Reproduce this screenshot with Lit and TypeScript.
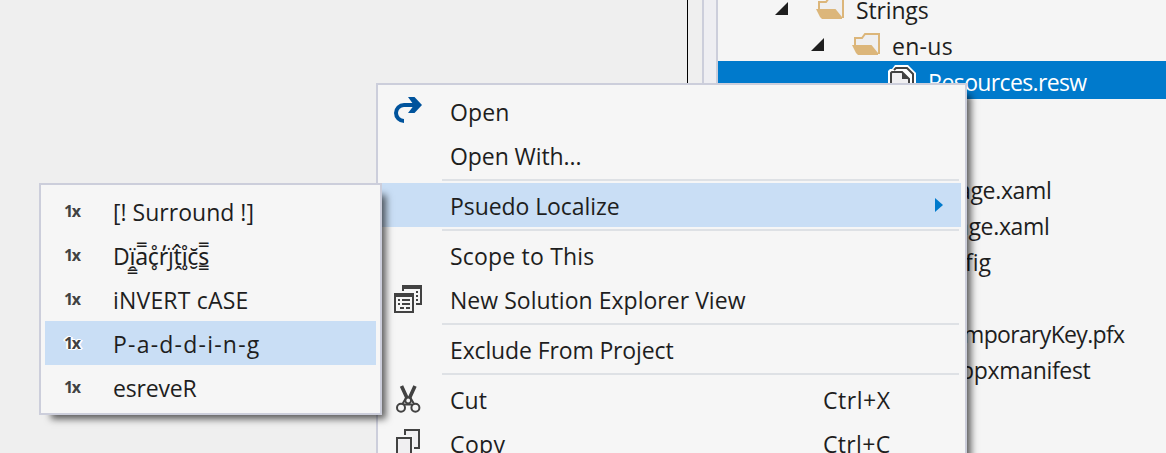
import { LitElement, html, css, svg, nothing } from 'lit';
import { customElement, property } from 'lit/decorators.js';

/** A label whose tracking is adjusted so that it takes up the given width. */
@customElement('fit-text')
class FitText extends LitElement {
  @property() text = '';
  @property({ type: Number }) width = 0;
  static styles = css`
    :host { display: block; white-space: pre; flex: none; }
    span { display: inline-block; }
  `;
  render() {
    return html`<span>${this.text}</span>`;
  }
  firstUpdated() {
    const el = this.renderRoot.querySelector('span') as HTMLElement;
    const n = [...this.text.normalize('NFD').replace(/\p{M}/gu, '')].length;
    if (!this.width || n < 2) return;
    const natural = el.getBoundingClientRect().width;
    el.style.letterSpacing = `${(this.width - natural) / n}px`;
  }
}

const openIcon = svg`<svg width="28" height="28" viewBox="0 0 28 28">
  <path d="M10 24A8 8 0 0 1 10 8H22" fill="none" stroke="#00539c" stroke-width="4"/>
  <path d="M14 0h6.500L28 8l-7.500 8H14l6-7.800z" fill="#00539c"/></svg>`;

const viewIcon = svg`<svg width="28" height="28" viewBox="0 0 28 28" shape-rendering="crispEdges">
  <path d="M8 0H28V20H22V18H26V4H10V6H8z" fill="#424242"/>
  <path d="M22 6h2v2h-2zM22 10h2v2h-2zM22 14h2v2h-2z" fill="#424242"/>
  <path d="M0 8H20V28H0zM2 12V26H18V12z" fill="#424242" fill-rule="evenodd"/>
  <path d="M4 14h2v2H4zM8 14h8v2H8zM4 18h2v2H4zM8 18h8v2H8zM6 22h4v2H6zM12 22h4v2h-4z" fill="#424242"/></svg>`;

const cutIcon = svg`<svg width="28" height="28" viewBox="0 0 28 28" fill="none" stroke="#424242">
  <path d="M7.500 1L13 13M21 1L15.500 13" stroke-width="3.600"/>
  <path d="M12.500 12L8.500 19M16 12l4 7" stroke-width="2"/>
  <circle cx="14.200" cy="15.500" r="2.800" stroke-width="1.800"/>
  <path d="M10 19.500H18" stroke-width="2"/>
  <circle cx="7" cy="22.800" r="4" stroke-width="2"/><circle cx="21.400" cy="22.800" r="4" stroke-width="2"/></svg>`;

const copyIcon = svg`<svg width="28" height="28" viewBox="0 0 28 28" shape-rendering="crispEdges">
  <path d="M11 1H25V18H19V6H11z" fill="#f0eff1"/>
  <path d="M10 0H26V20H20V18H24V2H12V6H10z" fill="#424242"/>
  <path d="M3 9H17V26H3z" fill="#f0eff1" stroke="#424242" stroke-width="2"/></svg>`;

const ICONS: Record<string, unknown> = { open: openIcon, view: viewIcon, cut: cutIcon, copy: copyIcon };

const folder = svg`<svg width="28" height="22" viewBox="0 0 28 22">
  <path d="M3 14V5H10L13 1H27V21" fill="#efeff0" stroke="#dcb67a" stroke-width="2"/>
  <path d="M0 12H19.500L26 20V22H6L4 20z" fill="#dcb67a"/></svg>`;

const files = svg`<svg width="28" height="32" viewBox="0 0 28 32">
  <path d="M0 32V6L2 4H4L7 0H20L28 8V32z" fill="#fff"/>
  <path d="M6 5L8 3H19L25 9V32" fill="none" stroke="#424242" stroke-width="2"/>
  <path d="M3 32V8L4 7H14L21 14V32z" fill="#f0eff1" stroke="#424242" stroke-width="2"/>
  <path d="M14 7L21 14H14z" fill="#424242"/></svg>`;

const twisty = svg`<svg class="twisty" width="13" height="13" viewBox="0 0 13 13"><path d="M13 0V13H0z" fill="#1e1e1e"/></svg>`;

type Item = { label: string; w: number; icon?: string; keys?: string; arrow?: boolean; hot?: boolean } | null;

const MENU: Item[] = [
  { label: 'Open', w: 59.5, icon: 'open' },
  { label: 'Open With...', w: 131.5 },
  null,
  { label: 'Psuedo Localize', w: 169.5, arrow: true, hot: true },
  null,
  { label: 'Scope to This', w: 144.5 },
  { label: 'New Solution Explorer View', w: 295.5, icon: 'view' },
  null,
  { label: 'Exclude From Project', w: 223.5 },
  null,
  { label: 'Cut', w: 37, icon: 'cut', keys: 'Ctrl+X' },
  { label: 'Copy', w: 55.5, icon: 'copy', keys: 'Ctrl+C' },
];

const SUB = [
  { label: '[! Surround !]', w: 141 },
  { label: 'Di\u0308\u032f\u0333a\u033fc\u030a\u0325r\u0313j\u0308t\u0302\u032di\u030a\u0325c\u0306\u032es\u033f\u0333', w: 96 },
  { label: 'iNVERT cASE', w: 135.5 },
  { label: 'P-a-d-d-i-n-g', w: 147.5, hot: true },
  { label: 'esreveR', w: 83.5 },
];

@customElement('app-root')
class AppRoot extends LitElement {
  static styles = css`
    :host {
      display: block; position: relative; width: 1166px; height: 453px; overflow: hidden;
      background: #efefef; color: #1e1e1e;
      font: 23px/36px "Open Sans", "Noto Sans", sans-serif;
    }
    svg { display: block; flex: none; }
    .page { display: flex; height: 100%; }
    .editor { width: 687px; border-right: 1px solid #000; }
    .gutter { width: 14px; }
    .split { width: 12px; background: #eeeef2; border: solid #cccedb; border-width: 0 2px; }
    .tree { flex: 1; background: #f5f5f5; overflow: hidden; }
    .node { display: flex; align-items: center; height: 36px; }
    .node:first-child { margin-top: -10px; }
    .node fit-text { margin-top: 3px; }
    .twisty { margin-top: 1px; }
    .l1 { padding-left: 57px; }
    .l2 { padding-left: 93px; }
    .l3 { padding-left: 170px; }
    .node .folder { margin: 0 12px 0 28px; }
    .node .files { margin: 2px 12px 0 0; }
    .sel { height: 38px; margin: -1px 0; background: #007acc; color: #fff; }

    .menu {
      position: absolute; box-sizing: border-box; border: 2px solid #cccedb; padding: 4px;
      background: #f6f6f6; box-shadow: 8px 8px 7px -4px rgba(0, 0, 0, .62);
    }
    .main { left: 376px; top: 83px; width: 591px; height: 400px; }
    .sub { left: 39px; top: 183px; width: 343px; }
    .item { display: flex; align-items: center; height: 44px; }
    .item fit-text { margin-top: 1px; }
    .hot { background: #c9def5; }
    .sep { height: 2px; margin: 2px 2px 2px 60px; background: #dee1e5; }
    .ico { width: 28px; margin: 0 28px 0 12px; flex: none; }
    .main .label { flex: 1; }
    .keys { width: 138px; }
    .arrow { margin-right: 18px; }
    .one {
      width: 49px; padding-left: 19px; flex: none; margin-top: -1px;
      font: bold 16px/20px "Open Sans", "Noto Sans", sans-serif; color: #424242;
      letter-spacing: -1.5px;
    }
    .hot .one { text-shadow: 1px 0 #fff, -1px 0 #fff, 0 1px #fff, 0 -1px #fff, 2px 0 #fff, -2px 0 #fff, 1px 1px #fff, -1px -1px #fff; }
  `;

  node(text: string, w: number, x: number) {
    return html`<div class="node" style="padding-left:${x - 718}px"><fit-text .text=${text} .width=${w}></fit-text></div>`;
  }

  item(i: Item) {
    if (!i) return html`<div class="sep"></div>`;
    return html`<div class="item ${i.hot ? 'hot' : ''}">
      <div class="ico">${i.icon ? ICONS[i.icon] : nothing}</div>
      <fit-text class="label" .text=${i.label} .width=${i.w}></fit-text>
      ${i.keys ? html`<div class="keys"><fit-text .text=${i.keys} .width=${67.5}></fit-text></div>` : nothing}
      ${i.arrow ? html`<svg class="arrow" width="8" height="14" viewBox="0 0 8 14"><path d="M0 0L8 7L0 14z" fill="#007acc"/></svg>` : nothing}
    </div>`;
  }

  render() {
    return html`
      <div class="page">
        <div class="editor"></div>
        <div class="gutter"></div>
        <div class="split"></div>
        <div class="tree">
          <div class="node l1">${twisty}<div class="folder">${folder}</div><fit-text .text=${'Strings'} .width=${72.5}></fit-text></div>
          <div class="node l2">${twisty}<div class="folder">${folder}</div><fit-text .text=${'en-us'} .width=${61}></fit-text></div>
          <div class="node l3 sel"><div class="files">${files}</div><fit-text .text=${'Resources.resw'} .width=${158.5}></fit-text></div>
          <div class="node"></div>
          <div class="node"></div>
          ${this.node('age.xaml', 93.5, 958)}
          ${this.node('age.xaml', 93.5, 956)}
          ${this.node('fig', 26, 965)}
          <div class="node"></div>
          ${this.node('mporaryKey.pfx', 161.5, 963)}
          ${this.node('ppxmanifest', 130.5, 960)}
        </div>
      </div>
      <div class="menu main">${MENU.map((i) => this.item(i))}</div>
      <div class="menu sub">
        ${SUB.map((s) => html`<div class="item ${s.hot ? 'hot' : ''}"><div class="one">1x</div><fit-text .text=${s.label} .width=${s.w}></fit-text></div>`)}
      </div>
    `;
  }
}
